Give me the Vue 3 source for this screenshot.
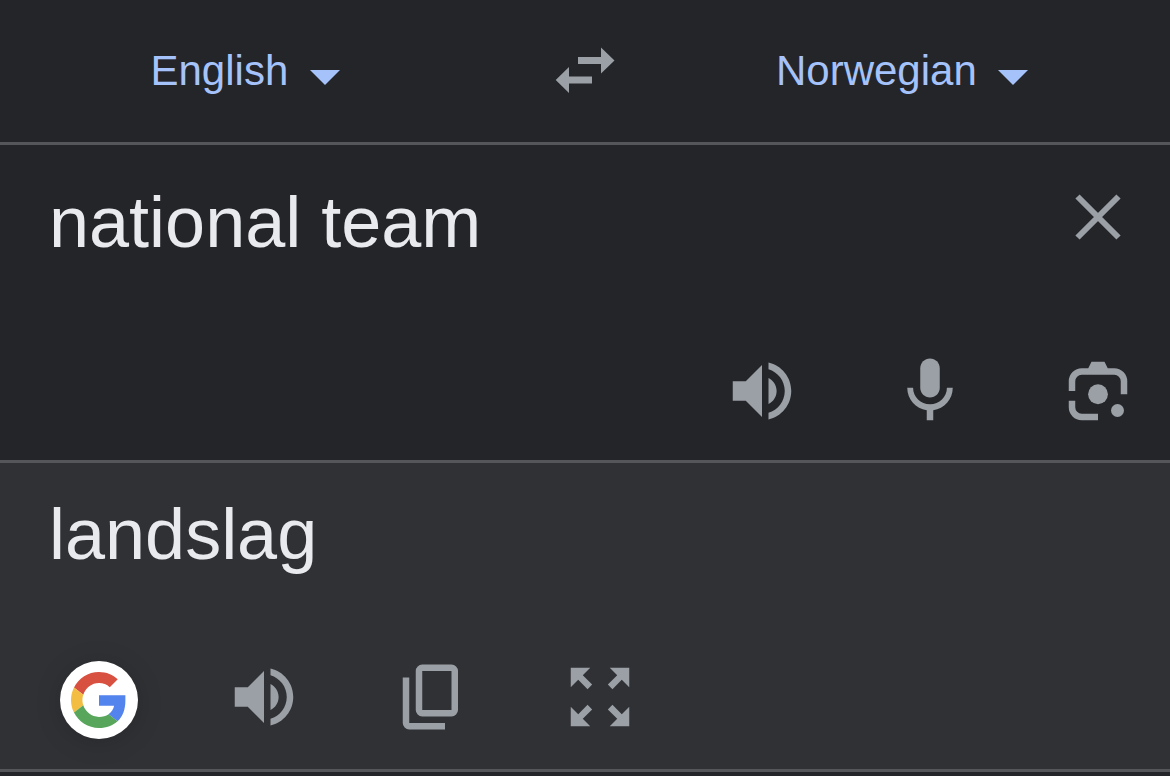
<script setup>
import { ref } from 'vue'

const source = ref('national team')
const translation = ref('landslag')

const speaker =
  'M3 9v6h4l5 5V4L7 9H3zm13.5 3c0-1.77-1.02-3.29-2.5-4.03v8.05c1.48-.73 2.5-2.25 2.5-4.02zM14 3.23v2.06c2.89.86 5 3.54 5 6.71s-2.11 5.85-5 6.71v2.06c4.01-.91 7-4.49 7-8.77s-2.99-7.86-7-8.77z'
</script>

<template>
  <main class="translator">
    <header class="languages">
      <div class="language language-from">
        <select aria-label="Source language">
          <option>English</option>
        </select>
        <svg class="caret" viewBox="0 0 30 30" aria-hidden="true"><path d="M0 14h30L15 29z" /></svg>
      </div>
      <button class="swap" type="button" aria-label="Swap languages">
        <svg viewBox="0 0 60 48" aria-hidden="true">
          <path d="M23 10h23V0.500l13.500 13-13.500 13V17H23zM37 36.500H14V46L0.700 33 14 20v9.500h23z" />
        </svg>
      </button>
      <div class="language">
        <select aria-label="Target language">
          <option>Norwegian</option>
        </select>
        <svg class="caret" viewBox="0 0 30 30" aria-hidden="true"><path d="M0 14h30L15 29z" /></svg>
      </div>
    </header>

    <section class="panel source">
      <div class="entry">
        <textarea v-model="source" class="phrase" rows="1" aria-label="Source text" spellcheck="false"></textarea>
        <button class="clear" type="button" aria-label="Clear text">
          <svg viewBox="0 0 48 48" aria-hidden="true">
            <path d="M3.500 3.500l41 41M44.500 3.500l-41 41" fill="none" stroke="currentColor" stroke-width="6" />
          </svg>
        </button>
      </div>
      <div class="tools tools-end">
        <button class="tool" type="button" aria-label="Listen to source text">
          <svg viewBox="0 0 24 24" aria-hidden="true"><path :d="speaker" /></svg>
        </button>
        <button class="tool" type="button" aria-label="Translate by voice">
          <svg viewBox="0 0 24 24" aria-hidden="true">
            <path d="M12 14c1.660 0 3-1.340 3-3V5c0-1.660-1.340-3-3-3S9 3.340 9 5v6c0 1.660 1.340 3 3 3z" />
            <path d="M17.200 11c0 2.870-2.330 5.100-5.200 5.100S6.800 13.870 6.800 11H5c0 3.530 2.610 6.430 6 6.920V21h2v-3.080c3.390-.49 6-3.390 6-6.920z" />
          </svg>
        </button>
        <button class="tool" type="button" aria-label="Translate with camera">
          <svg viewBox="0 0 24 24" aria-hidden="true">
            <path d="M3 12V9a4 4 0 0 1 4-4h2l1-2h4l1 2h2a4 4 0 0 1 4 4v4h-2V9a2 2 0 0 0-2-2H7a2 2 0 0 0-2 2v3z" />
            <path d="M3 15v2a4 4 0 0 0 4 4h5v-2H7a2 2 0 0 1-2-2v-2z" />
            <circle cx="12" cy="13" r="3.050" />
            <circle cx="18" cy="18" r="2" />
          </svg>
        </button>
      </div>
    </section>

    <section class="panel target">
      <p class="phrase" lang="no">{{ translation }}</p>
      <div class="tools">
        <button class="tool google" type="button" aria-label="Search with Google">
          <svg viewBox="0 0 78 78" aria-hidden="true">
            <circle cx="42" cy="42" r="39" fill="#fff" />
            <g transform="translate(14 14) scale(1.167)">
              <path fill="#d85040" d="M24 9.500c3.540 0 6.710 1.220 9.210 3.600l6.850-6.850C35.900 2.380 30.470 0 24 0 14.620 0 6.510 5.380 2.560 13.220l7.980 6.190C12.430 13.720 17.740 9.500 24 9.500z" />
              <path fill="#5383ec" d="M46.600 20H24v9.020h12.940c-.58 2.960-2.260 5.480-4.780 7.180l7.730 6c4.510-4.180 6.710-10.360 6.710-17.650z" />
              <path fill="#f2bd42" d="M10.530 28.590c-.48-1.450-.76-2.990-.76-4.590s.27-3.140.76-4.590l-7.980-6.190C.92 16.460 0 20.120 0 24c0 3.880.92 7.540 2.560 10.780z" />
              <path fill="#58a55c" d="M24 48c6.480 0 11.930-2.130 15.890-5.810l-7.730-6c-2.150 1.450-4.920 2.300-8.160 2.300-6.260 0-11.570-4.220-13.470-9.910l-7.980 6.190C6.510 42.620 14.620 48 24 48z" />
            </g>
          </svg>
        </button>
        <button class="tool" type="button" aria-label="Listen to translation">
          <svg viewBox="0 0 24 24" aria-hidden="true"><path :d="speaker" /></svg>
        </button>
        <button class="tool" type="button" aria-label="Copy translation">
          <svg viewBox="0 0 24 24" aria-hidden="true">
            <path fill-rule="evenodd" d="M9 2h9a2 2 0 0 1 2 2v12a2 2 0 0 1-2 2H9a2 2 0 0 1-2-2V4a2 2 0 0 1 2-2zm0 2v12h9V4z" />
            <path d="M3 6v14a2 2 0 0 0 2 2h11v-2H5V6z" />
          </svg>
        </button>
        <button class="tool" type="button" aria-label="Show full screen">
          <svg viewBox="0 0 24 24" aria-hidden="true">
            <path d="M15 3l2.300 2.300-2.890 2.870 1.420 1.420L18.700 6.700 21 9V3zM3 9l2.300-2.300 2.870 2.890 1.420-1.420L6.700 5.300 9 3H3zm6 12l-2.300-2.300 2.890-2.870-1.420-1.420L5.300 17.300 3 15v6zm12-6l-2.300 2.300-2.870-2.890-1.420 1.420 2.890 2.870L15 21h6z" />
          </svg>
        </button>
      </div>
    </section>
  </main>
</template>

<style>
body {
  background: #242529;
}
</style>

<style scoped>
.translator {
  font-family: "Liberation Sans", Arial, Helvetica, sans-serif;
  color: #e8eaed;
}

svg {
  display: block;
  fill: currentColor;
}

button {
  flex: none;
  padding: 0;
  border: 0;
  background: none;
  color: #9aa0a6;
  cursor: pointer;
}

.languages {
  display: grid;
  grid-template-columns: 1fr 98px 1fr;
  align-items: center;
  padding: 47px 0;
  border-bottom: 3px solid #55565a;
}

.language {
  display: flex;
  align-items: center;
  justify-content: center;
  gap: 21px;
  color: #a5c3fa;
}

.language-from {
  padding-right: 46px;
}

.language select {
  appearance: none;
  margin: 0;
  padding: 0;
  border: 0;
  background: none;
  color: inherit;
  font: inherit;
  font-size: 42px;
  line-height: 48px;
  cursor: pointer;
}

.caret {
  width: 30px;
  height: 30px;
  pointer-events: none;
}

.swap {
  justify-self: center;
}

.swap svg {
  width: 60px;
  height: 48px;
}

.panel {
  display: flex;
  flex-direction: column;
  border-bottom: 3px solid #55565a;
}

.source {
  gap: 90px;
  padding: 37px 0 30px;
}

.target {
  gap: 84px;
  padding: 31px 0 33px;
  background: #303135;
}

.entry {
  display: flex;
  align-items: flex-start;
  padding-right: 48px;
}

.phrase {
  flex: 1;
  min-width: 0;
  margin: 0;
  padding: 0 49px;
  border: 0;
  outline: 0;
  background: none;
  color: inherit;
  font: inherit;
  font-size: 72px;
  line-height: 80px;
  resize: none;
  overflow: hidden;
}

.clear {
  padding-top: 11px;
}

.clear svg {
  width: 48px;
  height: 48px;
}

.tools {
  display: flex;
  gap: 90px;
  padding: 0 33px 0 57px;
}

.tools-end {
  justify-content: flex-end;
}

.tool svg {
  width: 78px;
  height: 78px;
}

.google svg {
  overflow: visible;
  filter: drop-shadow(0 3px 12px rgba(0, 0, 0, 0.15));
}
</style>
